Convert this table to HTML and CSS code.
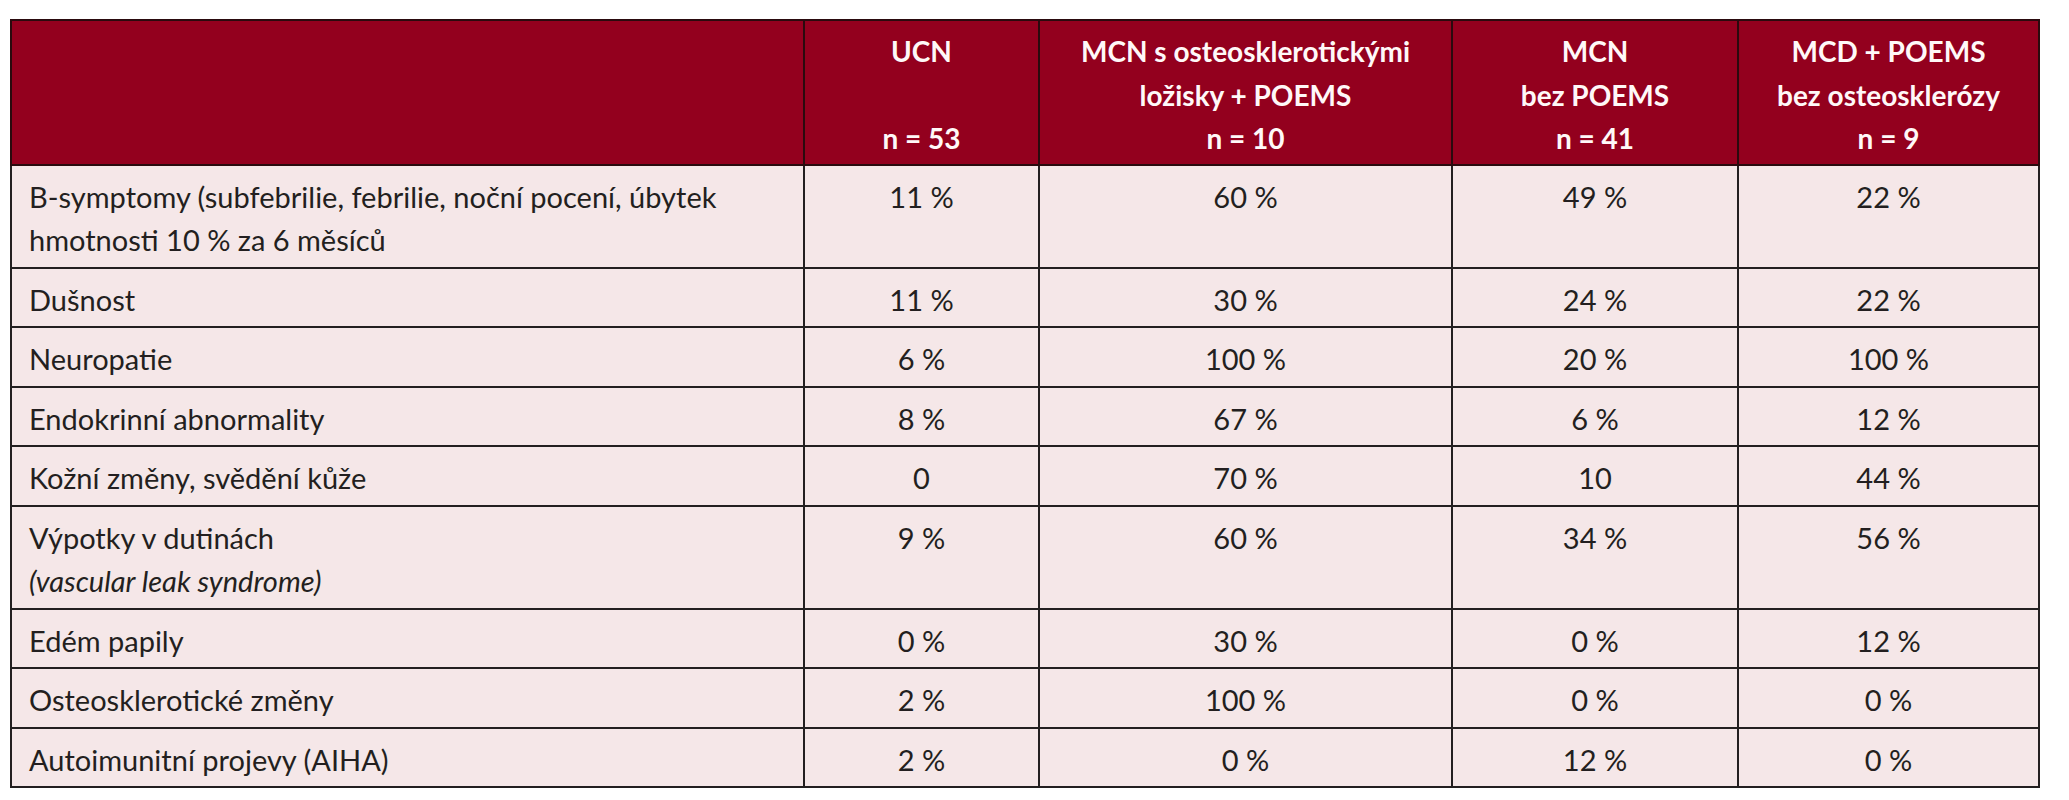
FILE: index.html
```html
<!DOCTYPE html>
<html lang="cs">
<head>
<meta charset="utf-8">
<title>Tabulka</title>
<link rel="stylesheet" href="styles.css">
</head>
<body>
<table class="data">
  <colgroup>
    <col class="c-label">
    <col class="c-ucn">
    <col class="c-mcn-os">
    <col class="c-mcn">
    <col class="c-mcd">
  </colgroup>
  <thead>
    <tr>
      <th></th>
      <th>UCN<br>&nbsp;<br>n = 53</th>
      <th>MCN s osteosklerotickými<br>ložisky + POEMS<br>n = 10</th>
      <th>MCN<br>bez POEMS<br>n = 41</th>
      <th>MCD + POEMS<br>bez osteosklerózy<br>n = 9</th>
    </tr>
  </thead>
  <tbody>
    <tr><td>B-symptomy (subfebrilie, febrilie, noční pocení, úbytek hmotnosti 10 % za 6 měsíců</td><td>11 %</td><td>60 %</td><td>49 %</td><td>22 %</td></tr>
    <tr><td>Dušnost</td><td>11 %</td><td>30 %</td><td>24 %</td><td>22 %</td></tr>
    <tr><td>Neuropatie</td><td>6 %</td><td>100 %</td><td>20 %</td><td>100 %</td></tr>
    <tr><td>Endokrinní abnormality</td><td>8 %</td><td>67 %</td><td>6 %</td><td>12 %</td></tr>
    <tr><td>Kožní změny, svědění kůže</td><td>0</td><td>70 %</td><td>10</td><td>44 %</td></tr>
    <tr><td>Výpotky v dutinách<br><em>(vascular leak syndrome)</em></td><td>9 %</td><td>60 %</td><td>34 %</td><td>56 %</td></tr>
    <tr><td>Edém papily</td><td>0 %</td><td>30 %</td><td>0 %</td><td>12 %</td></tr>
    <tr><td>Osteosklerotické změny</td><td>2 %</td><td>100 %</td><td>0 %</td><td>0 %</td></tr>
    <tr><td>Autoimunitní projevy (AIHA)</td><td>2 %</td><td>0 %</td><td>12 %</td><td>0 %</td></tr>
  </tbody>
</table>
</body>
</html>
```
FILE: styles.css
```css
html, body {
  margin: 0;
  padding: 0;
  background: #ffffff;
}
body {
  padding: 19px 0 0 10px;
  font-family: Lato, "Liberation Sans", sans-serif;
  color: #231f20;
}
.data {
  border-collapse: collapse;
  table-layout: fixed;
  width: 2028px;
  font-size: 28px;
  line-height: 43.5px;
}
.c-label { width: 793px; }
.c-ucn { width: 235px; }
.c-mcn-os { width: 413px; }
.c-mcn { width: 286px; }
.c-mcd { width: 301px; }
.data th,
.data td {
  border: 2px solid #231f20;
  vertical-align: top;
  padding: 9px 6px 5px 6px;
}
.data th {
  background: #93001e;
  color: #fff8f8;
  font-weight: 700;
  text-align: center;
  border-color: #2a0a0e;
  padding-bottom: 3px;
}
.data td {
  background: #f5e7e8;
  text-align: center;
  font-weight: 400;
  font-size: 29px;
}
.data td:first-child {
  text-align: left;
  padding-left: 17px;
}
.data em {
  font-style: italic;
}
```
